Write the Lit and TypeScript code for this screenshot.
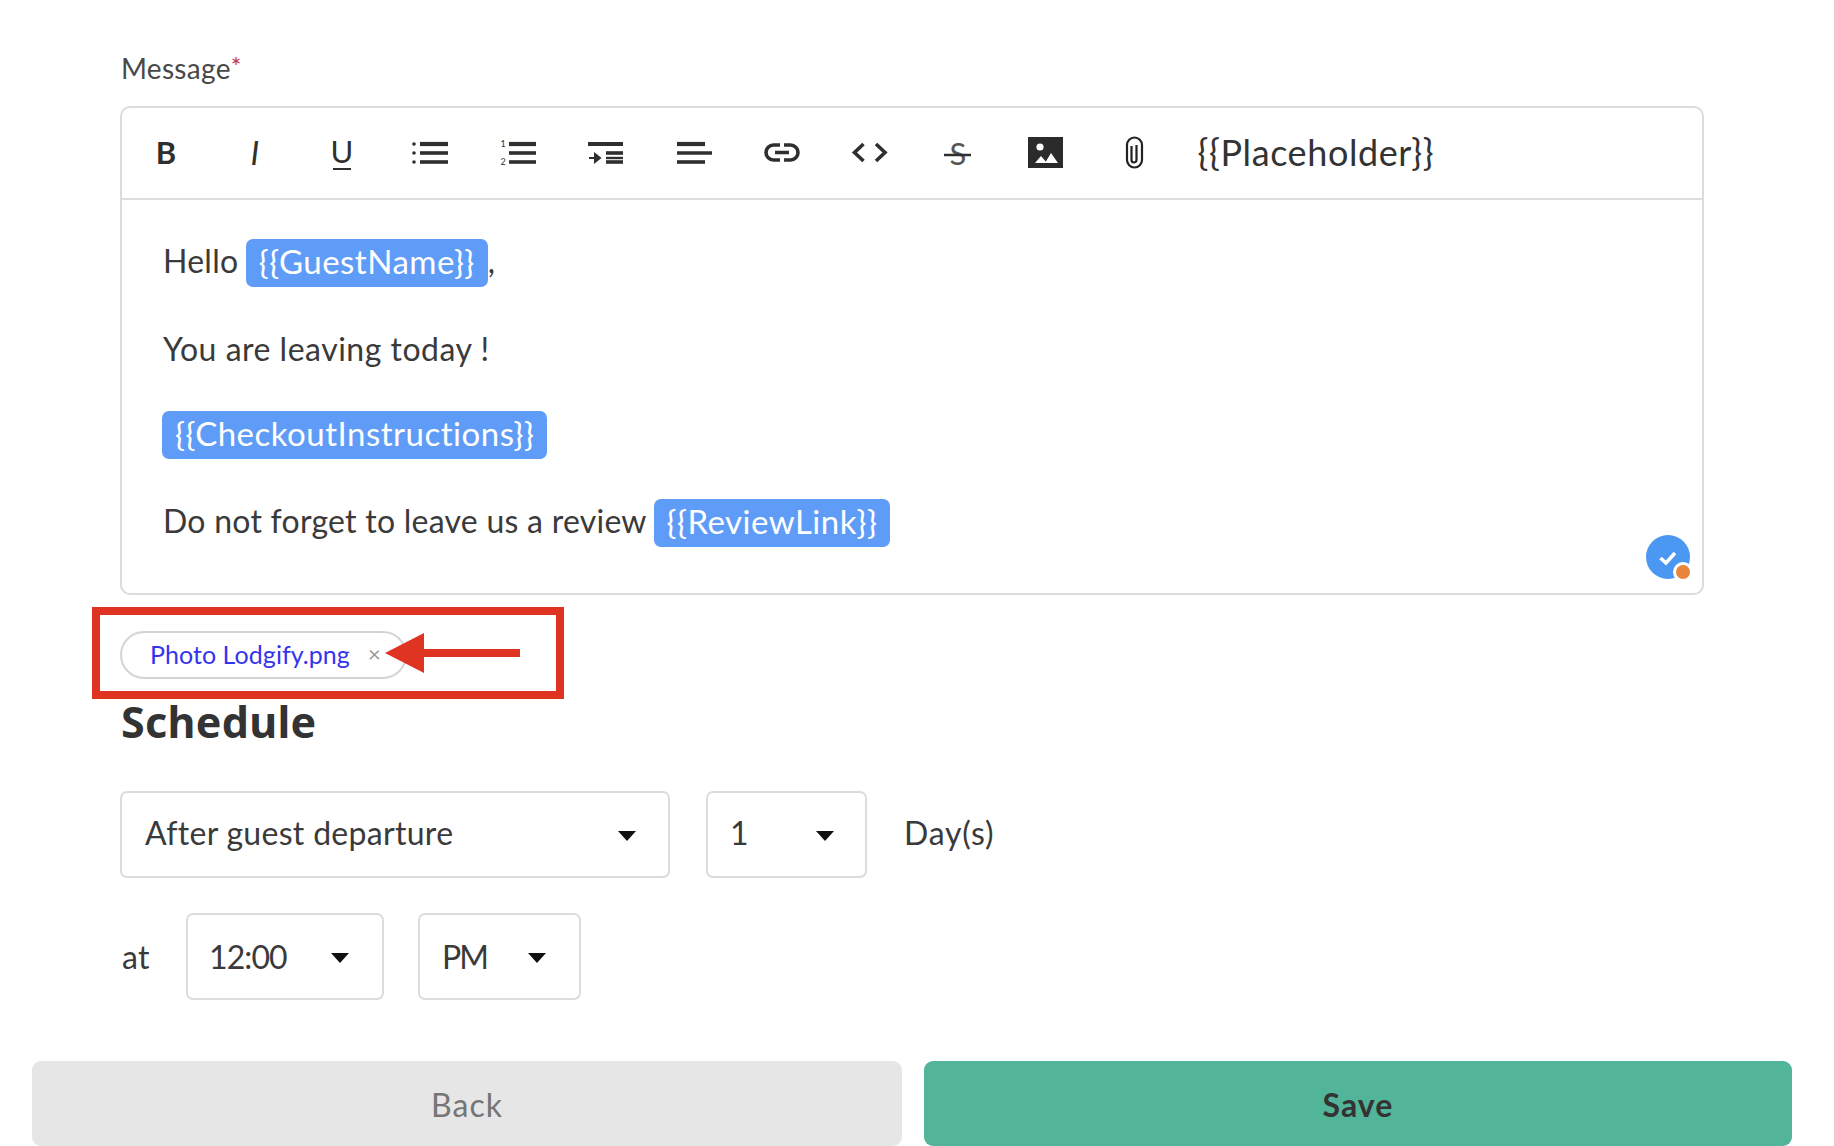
import { LitElement, html, css, svg } from "lit";
import { customElement } from "lit/decorators.js";

const ink = "#2f2f2f";
const line = (x1: number, x2: number, y: number, w = 3.6) =>
  svg`<line x1=${x1} x2=${x2} y1=${y} y2=${y} stroke=${ink} stroke-width=${w} />`;
const dot = (x: number, y: number, r = 1.8) => svg`<circle cx=${x} cy=${y} r=${r} fill=${ink} />`;

const icons = [
  svg`<text x="19" y="31" text-anchor="middle" font-size="31" font-weight="700" fill=${ink} font-family="Lato, sans-serif">B</text>`,
  svg`<text x="20" y="32" text-anchor="middle" font-size="33" font-style="italic" font-weight="400" fill=${ink} font-family="Lato, sans-serif">I</text>`,
  svg`<text x="20" y="30" text-anchor="middle" font-size="31" fill=${ink} font-family="Lato, sans-serif">U</text>${line(11, 29, 36, 2)}`,
  svg`${dot(4, 11)}${dot(4, 20)}${dot(4, 29)}${line(10, 38, 11, 4.2)}${line(10, 38, 20)}${line(10, 38, 29)}`,
  svg`<text x="5" y="14" text-anchor="middle" font-size="9" fill=${ink} font-family="Lato, sans-serif">1</text><text x="5" y="32" text-anchor="middle" font-size="9" fill=${ink} font-family="Lato, sans-serif">2</text>${line(11, 38, 11, 4.2)}${line(11, 38, 20)}${line(11, 38, 29)}`,
  svg`${line(2, 37, 11, 4.2)}${line(20, 37, 20)}${line(20, 37, 29)}${line(20, 37, 25, 2.4)}<path d="M3 25 H9 M9 21 L14 25 L9 29 Z" stroke=${ink} stroke-width="2" fill=${ink} />`,
  svg`${line(3, 31, 11, 4.200)}${line(3, 38, 20)}${line(3, 31, 29)}`,
  svg`<path d="M19 12 H12.500 a7.500 7.500 0 0 0 0 15 H19 M23 12 H29.500 a7.500 7.500 0 0 1 0 15 H23 M14 19.500 H28" fill="none" stroke=${ink} stroke-width="3.600" />`,
  svg`<path d="M14.500 11 L5.500 19.500 L14.500 28 M27 11 L36 19.500 L27 28" fill="none" stroke=${ink} stroke-width="3.600" />`,
  svg`<text x="21" y="31.500" text-anchor="middle" font-size="31" fill="#555" font-family="Lato, sans-serif">S</text>${line(7, 34, 22, 2.500)}`,
  svg`<rect x="3" y="4" width="35" height="31" fill="#2b2b2b" /><circle cx="15" cy="14" r="3.600" fill="#fff" /><path d="M10 30 L16 23 L22 30 Z M20 30 L26 20 L33 30 Z" fill="#fff" />`,
  svg`<path d="M29 12 V27 a7.500 7.500 0 0 1 -15 0 V12 a7.500 7.500 0 0 1 15 0 M18.500 13 V27 a2.500 2.500 0 0 0 5 0 V12" fill="none" stroke="#222" stroke-width="2.200" />`,
];

@customElement("app-root")
export class AppRoot extends LitElement {
  static styles = css`
    :host {
      display: block;
      position: relative;
      width: 1834px;
      height: 1146px;
      overflow: hidden;
      background: #fff;
      color: #333;
      font-family: Lato, "Noto Sans", sans-serif;
    }
    .page {
      display: flex;
      flex-direction: column;
      padding: 53px 42px 0 32px;
    }
    .form {
      display: flex;
      flex-direction: column;
      padding-left: 88px;
      width: 1584px;
    }
    .label {
      height: 32px;
      line-height: 27px;
      padding-left: 1px;
      font-size: 28px;
      color: #484848;
      letter-spacing: 0.3px;
      margin-bottom: 21px;
    }
    .label span {
      color: #c0394a;
      font-size: 25px;
      vertical-align: 3px;
    }
    .editor {
      position: relative;
      height: 489px;
      box-sizing: border-box;
      border: 2px solid #dcdcdc;
      border-radius: 10px;
    }
    .toolbar {
      display: flex;
      align-items: center;
      height: 90px;
      padding-left: 1px;
      border-bottom: 2px solid #dcdcdc;
    }
    .tool {
      flex: 0 0 87.8px;
      display: flex;
      justify-content: center;
    }
    .tool svg {
      width: 40px;
      height: 40px;
      display: block;
    }
    .ph {
      margin-left: 21px;
      padding-bottom: 2px;
      font-size: 36px;
      line-height: 40px;
      letter-spacing: 0.6px;
      color: #333;
    }
    .body {
      padding: 40px 0 0 41px;
      display: flex;
      flex-direction: column;
      gap: 40px;
      font-size: 32px;
      letter-spacing: 0.25px;
      color: #3a3a3a;
    }
    .row {
      height: 48px;
      line-height: 42px;
      white-space: nowrap;
    }
    .wide {
      letter-spacing: 0.5px;
    }
    .tight {
      margin-top: -4px;
    }
    .tag {
      display: inline-block;
      height: 48px;
      line-height: 44px;
      padding: 0 13px;
      margin-top: -1px;
      margin-left: -1px;
      font-size: 33px;
      letter-spacing: 0.5px;
      background: #5f9cf8;
      color: #fff;
      border-radius: 7px;
      vertical-align: top;
    }
    .badge {
      position: absolute;
      right: 8px;
      bottom: 10px;
      width: 48px;
      height: 48px;
    }
    .chip {
      margin-top: 36px;
      align-self: flex-start;
      box-sizing: border-box;
      width: 287px;
      height: 48px;
      border: 2px solid #d4d4d4;
      border-radius: 24px;
      padding: 0 0 3px 28px;
      display: flex;
      align-items: center;
      gap: 18px;
      font-size: 25px;
      letter-spacing: 0.05px;
      color: #3434ee;
    }
    .chip i {
      font-style: normal;
      color: #9a9a9a;
      font-size: 22px;
    }
    h2 {
      margin: 17px 0 0;
      padding-left: 1px;
      height: 52px;
      line-height: 52px;
      font-family: "Noto Sans", sans-serif;
      font-size: 43px;
      font-weight: 700;
      letter-spacing: 0.3px;
      color: #333;
    }
    .controls {
      display: flex;
      align-items: center;
      height: 87px;
      font-size: 32px;
      line-height: 40px;
      letter-spacing: 0.3px;
      color: #3a3a3a;
    }
    .first {
      margin-top: 43px;
    }
    .second {
      margin-top: 35px;
    }
    .select {
      box-sizing: border-box;
      height: 87px;
      border: 2px solid #dcdcdc;
      border-radius: 7px;
      display: flex;
      align-items: center;
      justify-content: space-between;
    }
    .select span {
      position: relative;
      top: -2px;
    }
    .second .select span {
      top: 0;
    }
    .select::after {
      content: "";
      border-left: 9px solid transparent;
      border-right: 9px solid transparent;
      border-top: 10px solid #111;
      margin-top: 2px;
    }
    .s1 {
      width: 550px;
      padding: 0 32px 0 23px;
    }
    .s2 {
      width: 161px;
      margin-left: 36px;
      padding: 0 31px 0 22px;
    }
    .s3 {
      width: 198px;
      margin-left: 36px;
      padding: 0 33px 0 21px;
      letter-spacing: -0.9px;
    }
    .s4 {
      width: 163px;
      margin-left: 34px;
      padding: 0 33px 0 22px;
      letter-spacing: -2px;
    }
    .days {
      margin-left: 37px;
      padding-bottom: 3px;
      letter-spacing: 0.8px;
    }
    .at {
      padding-left: 2px;
      width: 28px;
    }
    .footer {
      display: flex;
      gap: 22px;
      margin-top: 61px;
    }
    .btn {
      height: 85px;
      border-radius: 9px;
      display: flex;
      align-items: center;
      justify-content: center;
      font-size: 32px;
      line-height: 40px;
      padding-top: 2px;
      box-sizing: border-box;
    }
    .back {
      flex: 0 0 870px;
      background: #e6e6e6;
      color: #757575;
      letter-spacing: 1px;
    }
    .save {
      flex: 0 0 868px;
      background: #52b498;
      color: #333;
      font-weight: 700;
      letter-spacing: 1.1px;
    }
    .note {
      position: absolute;
      left: 92px;
      top: 607px;
      width: 472px;
      height: 92px;
      box-sizing: border-box;
      border: 8px solid #de3421;
      pointer-events: none;
    }
    .arrow {
      position: absolute;
      left: 385px;
      top: 633px;
      width: 136px;
      height: 40px;
    }
  `;

  render() {
    return html`
      <div class="page">
        <div class="form">
          <div class="label">Message<span>*</span></div>
          <div class="editor">
            <div class="toolbar">
              ${icons.map(
                (i) => html`<div class="tool"><svg viewBox="0 0 40 40">${i}</svg></div>`
              )}
              <div class="ph">{{Placeholder}}</div>
            </div>
            <div class="body">
              <div class="row">Hello <span class="tag">{{GuestName}}</span>,</div>
              <div class="row wide">You are leaving today !</div>
              <div class="row tight"><span class="tag">{{CheckoutInstructions}}</span></div>
              <div class="row">Do not forget to leave us a review <span class="tag">{{ReviewLink}}</span></div>
            </div>
            <svg class="badge" viewBox="0 0 48 48">
              <circle cx="22" cy="22" r="22" fill="#4a98f2" />
              <path d="M14.500 23 L20 28 L29 18" fill="none" stroke="#fff" stroke-width="3.500" />
              <circle cx="37" cy="37" r="10" fill="#fff" />
              <circle cx="37" cy="37" r="7" fill="#e8843c" />
            </svg>
          </div>
          <div class="chip"><span>Photo Lodgify.png</span><i>×</i></div>
          <h2>Schedule</h2>
          <div class="controls first">
            <div class="select s1"><span>After guest departure</span></div>
            <div class="select s2"><span>1</span></div>
            <div class="days">Day(s)</div>
          </div>
          <div class="controls second">
            <div class="at">at</div>
            <div class="select s3"><span>12:00</span></div>
            <div class="select s4"><span>PM</span></div>
          </div>
        </div>
        <div class="footer">
          <div class="btn back">Back</div>
          <div class="btn save">Save</div>
        </div>
      </div>
      <div class="note"></div>
      <svg class="arrow" viewBox="0 0 136 40">
        <path d="M0 20 L39 0 V16 H135 V24 H39 V40 Z" fill="#de3421" />
      </svg>
    `;
  }
}
